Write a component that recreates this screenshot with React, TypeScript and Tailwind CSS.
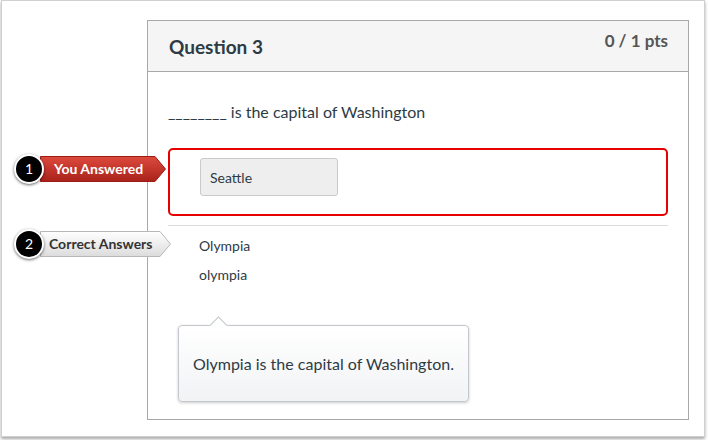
import type { ReactNode } from 'react'

const FONT = "font-['Lato','Noto_Sans',sans-serif]"

function Tag({ n, label, variant }: { n: number; label: string; variant: 'red' | 'gray' }) {
  const red = variant === 'red'
  const width = red ? 126 : 131
  return (
    <div className="flex items-center">
      <div className="relative z-10 w-[30px] h-[30px] rounded-full bg-black border-2 border-white shadow-[0_1px_3px_rgba(0,0,0,0.6)] flex items-center justify-center text-white text-[14px] leading-none">
        {n}
      </div>
      <div className="relative -ml-[4px] h-[26px] flex items-center" style={{ width }}>
        <svg className="absolute inset-0" width={width} height={26} viewBox={`0 0 ${width} 26`}>
          <defs>
            <linearGradient id={`g${n}`} x1="0" y1="0" x2="0" y2="1">
              {red ? (
                <>
                  <stop offset="0" stopColor="#dd4a3d" />
                  <stop offset="1" stopColor="#a9221a" />
                </>
              ) : (
                <>
                  <stop offset="0" stopColor="#ffffff" />
                  <stop offset="1" stopColor="#dcdcdc" />
                </>
              )}
            </linearGradient>
          </defs>
          <polygon
            points={`0.5,0.5 ${width - 11},0.5 ${width - 0.5},13 ${width - 11},25.5 0.5,25.5`}
            fill={`url(#g${n})`}
            stroke={red ? '#9a1c14' : '#b8b8b8'}
            strokeWidth="1"
          />
        </svg>
        <span
          className={`relative font-bold text-[14px] leading-none ${red ? 'text-white pl-[14px]' : 'text-[#333] pl-[9px]'}`}
        >
          {label}
        </span>
      </div>
    </div>
  )
}

function Tooltip({ children }: { children: ReactNode }) {
  return (
    <div className="relative ml-[10px] mt-[40px] w-[291px] h-[77px] rounded-[4px] border border-[#c4c8cc] bg-gradient-to-b from-white to-[#f2f3f5] shadow-[0_1px_3px_rgba(0,0,0,0.2)] flex items-center justify-center">
      <div className="absolute -top-[7px] left-[33px] w-[13px] h-[13px] rotate-45 bg-white border-l border-t border-[#c4c8cc]" />
      <span className="relative text-[16px] text-[#2d3b45]">{children}</span>
    </div>
  )
}

export default function App() {
  return (
    <div className={`w-[708px] h-[440px] bg-white overflow-hidden relative ${FONT}`}>
      <div className="ml-px w-[704px] h-[437px] border border-[#d0d0d0] shadow-[0_2px_3px_rgba(0,0,0,0.35)] pt-[19px] pl-[145px]">
        <div className="w-[542px] h-[400px] border border-[#a8a8a8] bg-white">
          <div className="h-[51px] bg-[#f5f5f5] border-b border-[#a8a8a8] flex justify-between pl-[21px] pr-[20px]">
            <h2 className="pt-[14px] text-[19px] leading-[24px] font-bold text-[#2d3b45]">Question 3</h2>
            <span className="pt-[10px] text-[17px] leading-[20px] font-bold text-[#555]">0 / 1 pts</span>
          </div>

          <div className="px-[20px]">
            <p className="mt-[30px] text-[16px] leading-[20px] text-[#2d3b45]">________ is the capital of Washington</p>

            <div className="mt-[26px] h-[68px] rounded-[5px] border-2 border-[#e60000] pt-[8px] pl-[30px]">
              <div className="w-[138px] h-[38px] bg-[#eeeeee] border border-[#cacaca] rounded-[3px] flex items-center pl-[9px] text-[14px] text-[#2d3b45]">
                Seattle
              </div>
            </div>

            <div className="mt-[9px] border-t border-[#dddddd]" />

            <div className="pl-[31px] pt-[10px] flex flex-col gap-[9px] text-[14px] leading-[20px] text-[#2d3b45]">
              <span>Olympia</span>
              <span>olympia</span>
            </div>

            <Tooltip>Olympia is the capital of Washington.</Tooltip>
          </div>
        </div>
      </div>

      <div className="absolute left-[14px] top-[154px]">
        <Tag n={1} label="You Answered" variant="red" />
      </div>
      <div className="absolute left-[14px] top-[229px]">
        <Tag n={2} label="Correct Answers" variant="gray" />
      </div>
    </div>
  )
}
